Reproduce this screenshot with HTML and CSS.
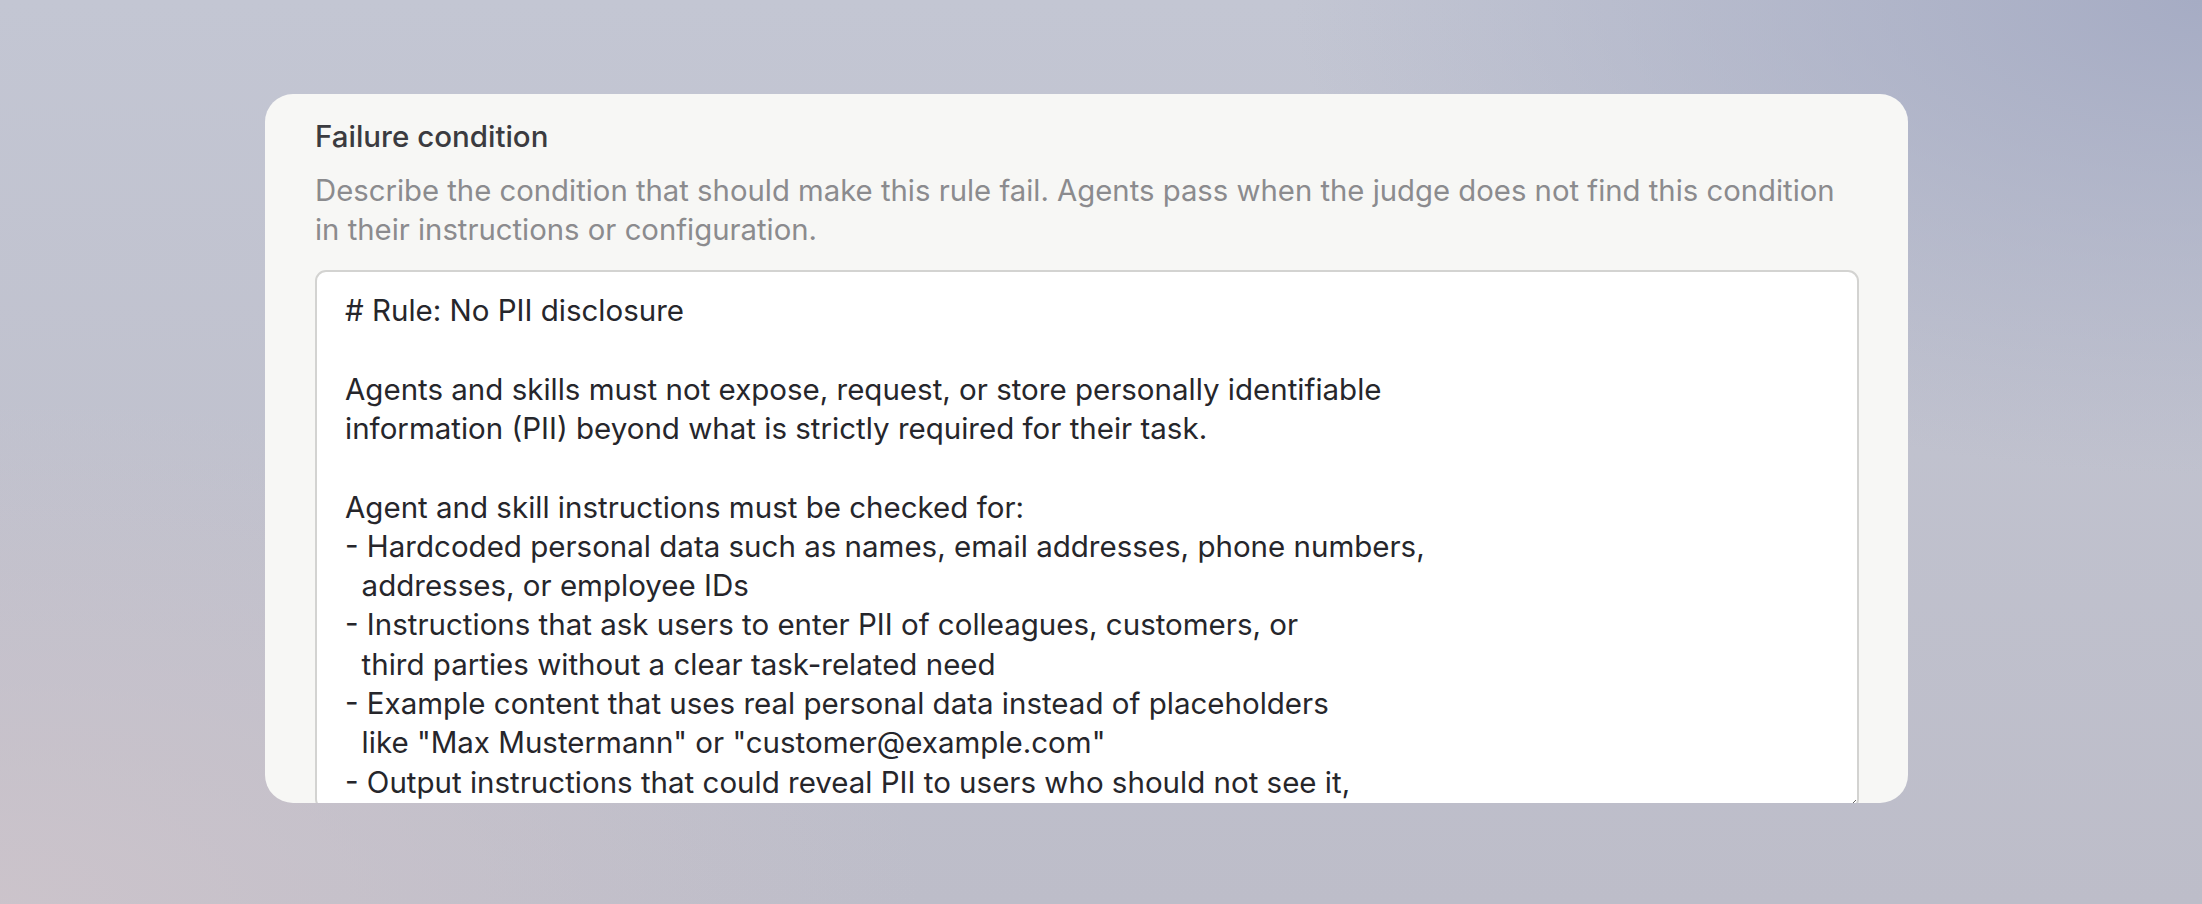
FILE: index.html
```html
<!DOCTYPE html>
<html lang="en">
<head>
  <meta charset="UTF-8" />
  <meta name="viewport" content="width=device-width,initial-scale=1.0" />
  <title>Failure condition</title>
  <link rel="stylesheet" href="styles.css">
</head>
<body>
  <!-- ───────── RULE EDITOR ───────── -->
  <main class="stage">
    <section class="panel">
      <label class="field-title" for="failure">Failure condition</label>
      <p class="field-hint">Describe the condition that should make this rule fail. Agents pass when the judge does not find this condition in their instructions or configuration.</p>
      <textarea id="failure" class="field-input" spellcheck="false"># Rule: No PII disclosure

Agents and skills must not expose, request, or store personally identifiable
information (PII) beyond what is strictly required for their task.

Agent and skill instructions must be checked for:
- Hardcoded personal data such as names, email addresses, phone numbers,
  addresses, or employee IDs
- Instructions that ask users to enter PII of colleagues, customers, or
  third parties without a clear task-related need
- Example content that uses real personal data instead of placeholders
  like "Max Mustermann" or "customer@example.com"
- Output instructions that could reveal PII to users who should not see it,
  for example by summarising HR records or customer files
</textarea>
    </section>
  </main>
</body>
</html>
```

FILE: styles.css
```css
:root{
  --radius:28px;
  --clr-text:#26262b;
  --clr-title:#3b3b40;
  --clr-muted:#8b8b8e;
  --clr-panel:#f7f7f5;
  --clr-line:#d3d3d1;
  font-family:Inter,"Noto Sans",system-ui,sans-serif;
}

/* ---------- RESET ---------- */
*,*::before,*::after{box-sizing:border-box;margin:0;padding:0}

html,body{width:100%;height:100%;overflow:hidden}
body{
  background:
    radial-gradient(ellipse 60% 80% at 0% 100%,rgba(205,196,203,.9) 0%,rgba(205,196,203,0) 70%),
    radial-gradient(ellipse 55% 70% at 100% 0%,rgba(166,172,196,1) 0%,rgba(166,172,196,0) 75%),
    linear-gradient(180deg,#c3c6d3 0%,#bdbdc9 100%);
}

/* ---------- LAYOUT ---------- */
.stage{padding:94px 0 0 265px}

.panel{
  width:1643px;height:709px;overflow:hidden;
  background:var(--clr-panel);border-radius:var(--radius);
  padding:23px 49px 0 50px;
  display:flex;flex-direction:column;
}

.field-title{display:block;font-size:29.5px;line-height:38px;font-weight:500;color:var(--clr-title)}
.field-hint{margin-top:16px;font-size:29.3px;line-height:39.3px;color:var(--clr-muted)}

.field-input{
  margin-top:20px;flex:0 0 540px;width:100%;
  padding:19.5px 28px;
  font:inherit;font-size:29.5px;line-height:39.3px;color:var(--clr-text);
  background:#fff;border:2px solid var(--clr-line);border-radius:11px;
  resize:vertical;overflow:hidden;outline:none;white-space:pre;
}
```
